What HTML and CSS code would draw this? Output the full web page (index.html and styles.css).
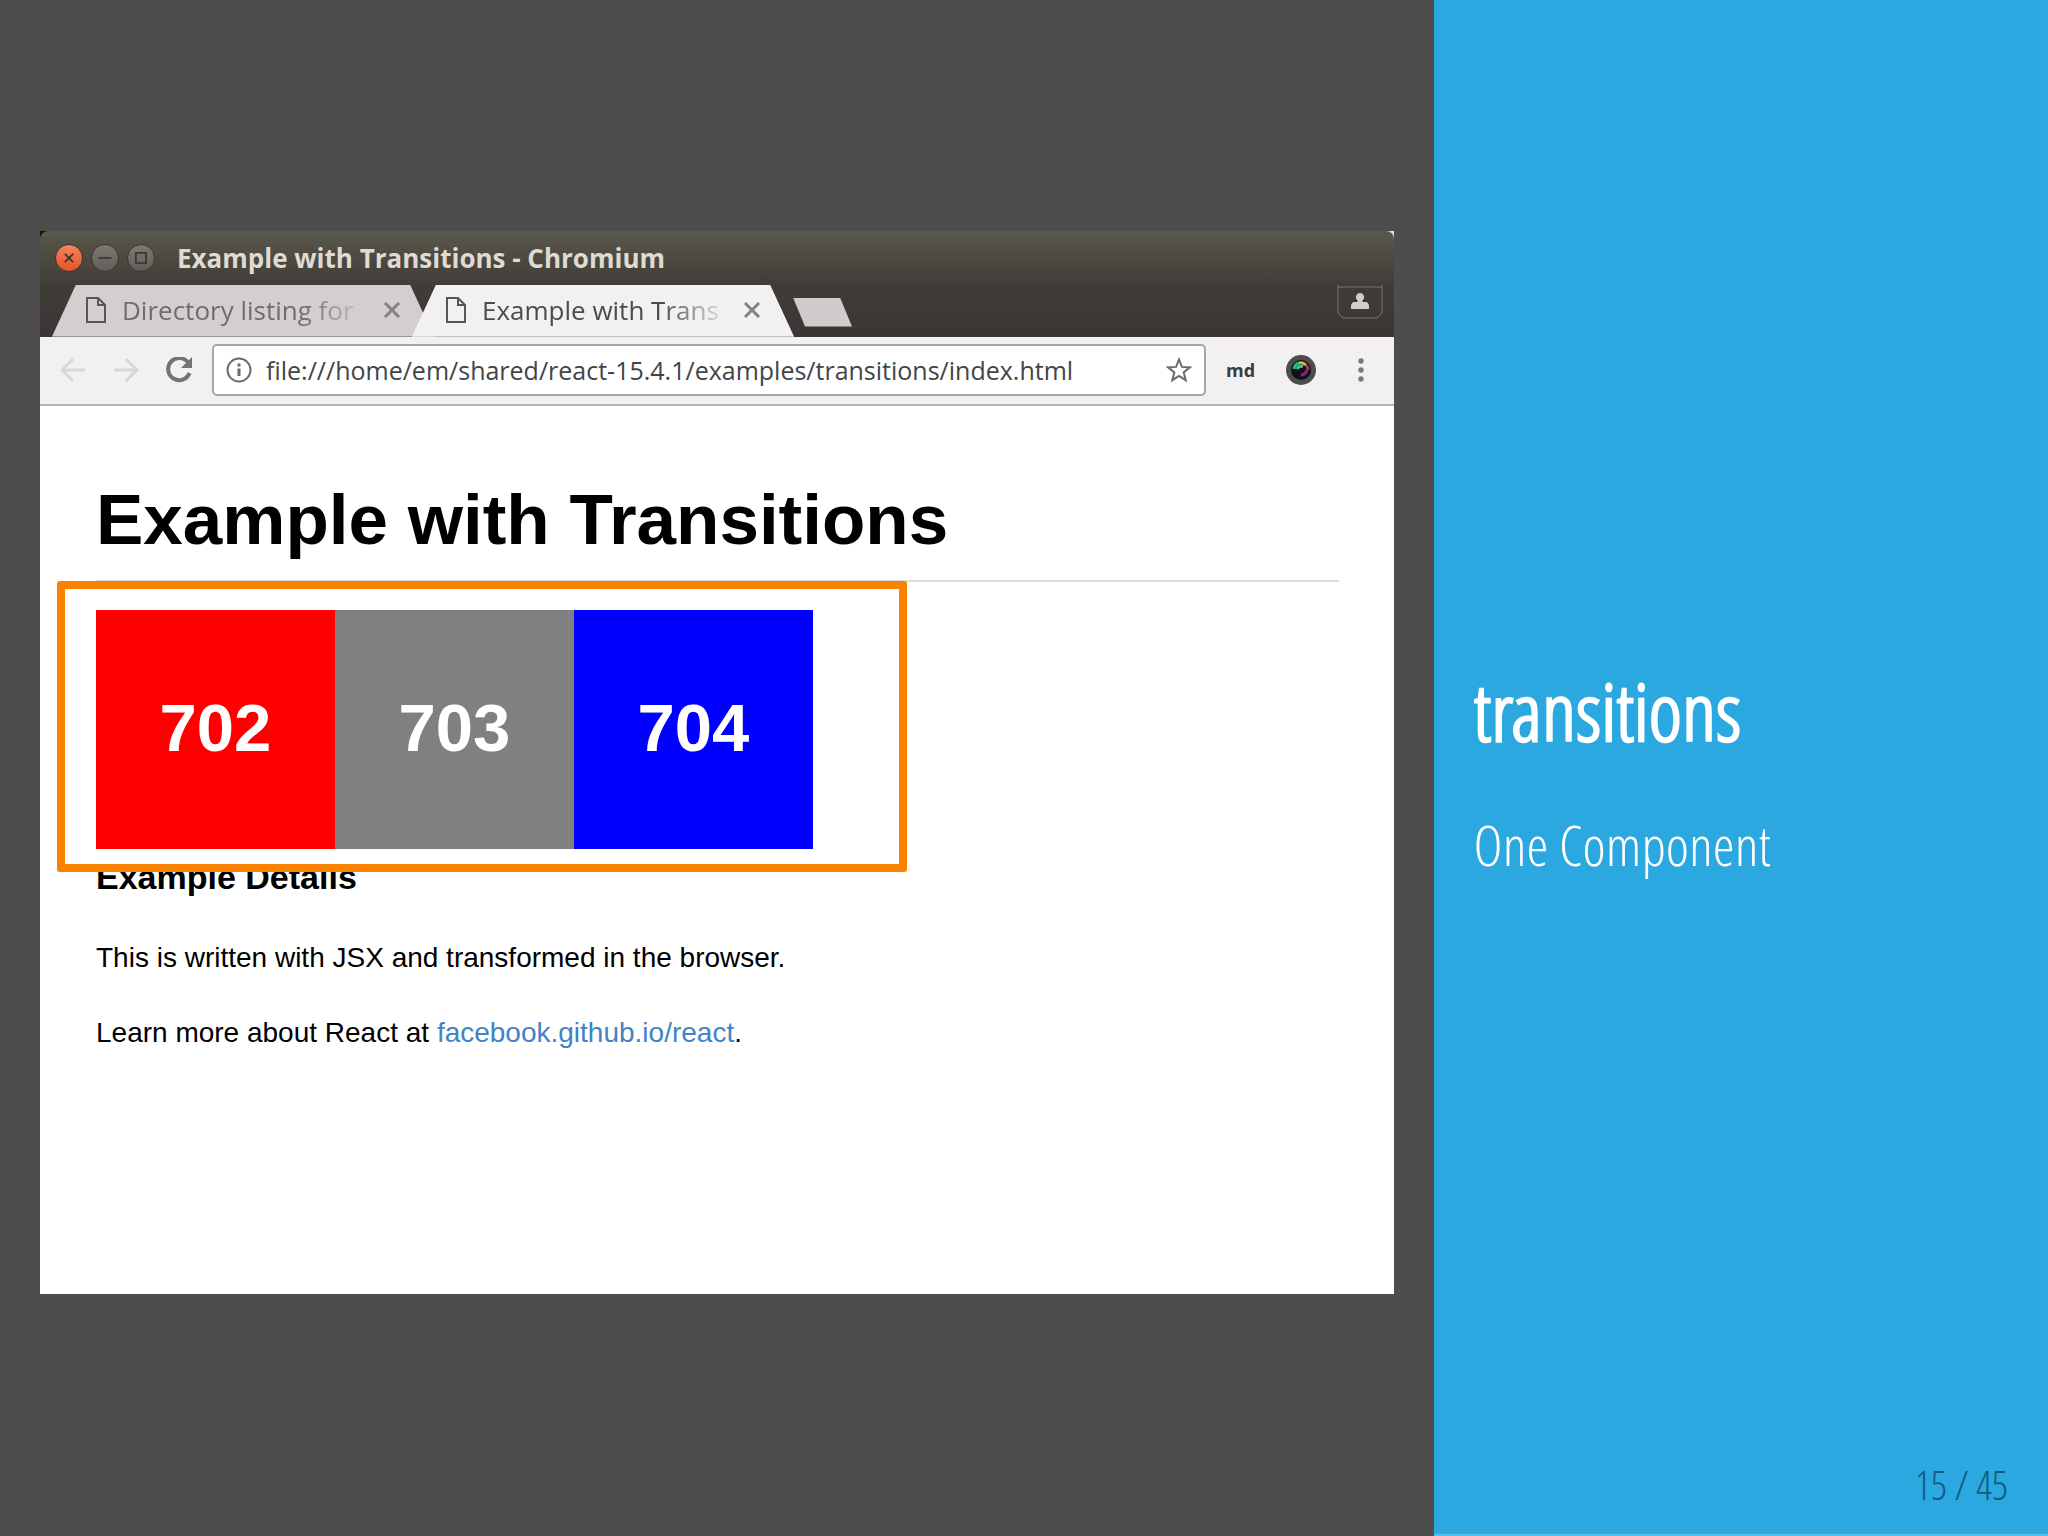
FILE: index.html
```
<!DOCTYPE html>
<html lang="en">
<head>
  <meta charset="UTF-8">
  <meta name="viewport" content="width=device-width, initial-scale=1.0">
  <title>transitions - One Component</title>
  <link rel="stylesheet" href="styles.css">
</head>
<body>
  <main class="slide">
    <section class="stage">
      <div class="window">
        <header class="titlebar">
          <button class="win-btn close" type="button" aria-label="Close">
            <svg viewBox="0 0 28 28"><path d="M9.500 9.500l9 9M18.500 9.500l-9 9"/></svg>
          </button>
          <button class="win-btn" type="button" aria-label="Minimize">
            <svg viewBox="0 0 28 28"><path d="M7 14h14"/></svg>
          </button>
          <button class="win-btn" type="button" aria-label="Maximize">
            <svg viewBox="0 0 28 28"><path d="M8.500 8.500h11v11h-11z"/></svg>
          </button>
          <span class="win-title">Example with Transitions - Chromium</span>
        </header>

        <div class="tabs">
          <div class="tab">
            <svg class="file" viewBox="0 0 20 26"><path d="M1 1h11l7 7v17H1zM12 1v7h7"/></svg>
            <span class="tab-name">Directory listing for</span>
            <button class="tab-close" type="button" aria-label="Close tab">
              <svg viewBox="0 0 16 16"><path d="M1 1l14 14M15 1L1 15"/></svg>
            </button>
          </div>
          <div class="tab active">
            <svg class="file" viewBox="0 0 20 26"><path d="M1 1h11l7 7v17H1zM12 1v7h7"/></svg>
            <span class="tab-name">Example with Trans</span>
            <button class="tab-close" type="button" aria-label="Close tab">
              <svg viewBox="0 0 16 16"><path d="M1 1l14 14M15 1L1 15"/></svg>
            </button>
          </div>
          <button class="new-tab" type="button" aria-label="New tab"></button>
          <button class="profile" type="button" aria-label="Profile">
            <svg viewBox="0 0 46 34">
              <path class="frame" d="M1 0v28l5 5h34l5-5V0M1 2h44"/>
              <path class="person" d="M23 8a4 4 0 0 1 2.500 7.200V17H30l2 3v4H14v-4l2-3h4.500v-1.800A4 4 0 0 1 23 8z"/>
            </svg>
          </button>
        </div>

        <div class="toolbar">
          <button class="nav-btn off" type="button" aria-label="Back">
            <svg viewBox="0 0 26 26"><path d="M25 13H2M13 2L2 13l11 11"/></svg>
          </button>
          <button class="nav-btn off" type="button" aria-label="Forward">
            <svg viewBox="0 0 26 26"><path d="M1 13h23M13 2l11 11-11 11"/></svg>
          </button>
          <button class="nav-btn" type="button" aria-label="Reload">
            <svg viewBox="0 0 26 26"><path class="thick" d="M22 5.500A11 11 0 1 0 23.500 16"/><path class="solid" d="M26 0v11H15z"/></svg>
          </button>
          <div class="address">
            <svg class="info" viewBox="0 0 26 26"><circle cx="13" cy="13" r="11.500"/><path d="M13 11.500V19M13 6.500v3"/></svg>
            <input class="url" type="text" aria-label="Address" value="file:///home/em/shared/react-15.4.1/examples/transitions/index.html">
            <svg class="star" viewBox="0 0 26 26"><path d="M13 2.500l2.900 7.400 8 .5-6.200 5 2 7.800-6.700-4.300-6.700 4.300 2-7.800-6.200-5 8-.5z"/></svg>
          </div>
          <button class="ext md" type="button">md</button>
          <button class="ext" type="button" aria-label="Camera">
            <svg class="lens" viewBox="0 0 30 30">
              <circle cx="15" cy="15" r="15" fill="#4b4d4f"/>
              <circle cx="15" cy="15" r="10" fill="#111"/>
              <path d="M8 14a7.500 7.500 0 0 1 5-6" stroke="#2fbd63"/>
              <path d="M13 8a8 8 0 0 1 7 2" stroke="#e8b33a"/>
              <path d="M11 14a5 5 0 0 1 6-2.500" stroke="#30c8b0"/>
              <path d="M20 10a7 7 0 0 1 2 5" stroke="#c03050"/>
              <path d="M21 15a7 7 0 0 1-6 5" stroke="#8d1b9c"/>
            </svg>
          </button>
          <button class="ext" type="button" aria-label="Menu">
            <svg class="dots" viewBox="0 0 6 26"><circle cx="3" cy="4" r="2.700"/><circle cx="3" cy="13" r="2.700"/><circle cx="3" cy="22" r="2.700"/></svg>
          </button>
        </div>

        <article class="page">
          <h1>Example with Transitions</h1>
          <div class="tiles">
            <div class="tile red">702</div>
            <div class="tile gray">703</div>
            <div class="tile blue">704</div>
            <div class="highlight"></div>
          </div>
          <h2>Example Details</h2>
          <p>This is written with JSX and transformed in the browser.</p>
          <p>Learn more about React at <a href="#">facebook.github.io/react</a>.</p>
        </article>
      </div>
    </section>

    <aside class="caption">
      <div class="caption-text">
        <h2>transitions</h2>
        <p>One Component</p>
      </div>
      <footer>15 / 45</footer>
    </aside>
  </main>
</body>
</html>
```
FILE: styles.css
```
* {
  box-sizing: border-box;
}
body {
  margin: 0;
  background-color: #4d4d4d;
  font-family: "Liberation Sans", Arial, sans-serif;
}
button {
  padding: 0;
  border: none;
  background: none;
  cursor: pointer;
}
svg {
  display: block;
  fill: none;
}

.slide {
  display: flex;
  min-height: 100vh;
}
.stage {
  width: 70%;
  display: flex;
  align-items: center;
  padding: 0 40px 12px;
}

/* browser window, the desktop shows behind its rounded corners */
.window {
  width: 100%;
  background: linear-gradient(90deg, #111 50%, #ddd 50%) top / 100% 20px no-repeat, #fff;
}
.titlebar {
  display: flex;
  align-items: center;
  gap: 8px;
  height: 54px;
  padding: 0 15px;
  border-radius: 8px 8px 0 0;
  background: linear-gradient(#5a574b, #403c37);
  color: #dfdbd2;
  font: bold 26px "Open Sans", "Noto Sans", sans-serif;
}
.win-btn {
  width: 28px;
  height: 28px;
  border: 1px solid #3a3833;
  border-radius: 50%;
  background: linear-gradient(#7c7a72, #5f5d57);
}
.win-btn svg {
  stroke: #3c3a35;
  stroke-width: 2;
}
.win-btn.close {
  background: linear-gradient(#f4845c, #e5532a);
}
.win-title {
  margin-left: 14px;
}

.tabs {
  display: flex;
  height: 52px;
  padding: 0 11px 0 12px;
  background: linear-gradient(#403c37, #3b3634);
}
.tab {
  display: flex;
  align-items: center;
  width: 382px;
  margin-right: -22px;
  padding: 0 34px;
  border-bottom: 1px solid #a9a5a6;
  background-color: #d3cfd0;
  clip-path: polygon(24px 0, 358px 0, 100% 100%, 0 100%);
  color: #6f6c6e;
  font: 26px "Open Sans", "Noto Sans", sans-serif;
}
.tab.active {
  z-index: 1;
  border-color: #f3f0f1;
  background-color: #f3f0f1;
  color: #4c4a4c;
}
.file {
  flex: none;
  width: 20px;
  height: 26px;
  stroke: #58565a;
  stroke-width: 2;
}
.tab-name {
  flex: 1;
  min-width: 0;
  margin: 0 14px 0 16px;
  overflow: hidden;
  white-space: nowrap;
  -webkit-mask-image: linear-gradient(90deg, #000 72%, transparent);
  mask-image: linear-gradient(90deg, #000 72%, transparent);
}
.tab-close svg {
  width: 16px;
  height: 16px;
  stroke: #858183;
  stroke-width: 3;
}
.new-tab {
  width: 59px;
  height: 29px;
  margin: 13px 0 0 21px;
  background-color: #d0cccc;
  clip-path: polygon(0 0, 47px 0, 100% 100%, 12px 100%);
}
.profile {
  width: 46px;
  height: 34px;
  margin-left: auto;
}
.frame {
  stroke: #77736e;
  stroke-width: 1;
}
.person {
  fill: #d0cdca;
}

.toolbar {
  display: flex;
  align-items: center;
  height: 69px;
  padding: 0 18px 0 20px;
  border-bottom: 2px solid #b5b2b3;
  background-color: #f3f0f1;
}
.nav-btn {
  width: 26px;
  margin-right: 27px;
}
.nav-btn:nth-child(3) {
  margin-right: 20px;
}
.nav-btn svg {
  stroke: #757274;
  stroke-width: 3;
}
.nav-btn.off svg {
  stroke: #d9d6d7;
}
.nav-btn .thick {
  stroke-width: 4;
}
.nav-btn .solid {
  fill: #757274;
  stroke: none;
}
.address {
  flex: 1;
  display: flex;
  align-items: center;
  height: 52px;
  padding: 0 12px;
  border: 2px solid #a9a5a6;
  border-radius: 5px;
  background-color: #fff;
}
.info, .star {
  flex: none;
  width: 26px;
  height: 26px;
  stroke: #6c6a6c;
  stroke-width: 2;
}
.info path {
  stroke-width: 3;
}
.url {
  flex: 1;
  min-width: 0;
  margin: 0 14px;
  padding: 0;
  border: none;
  outline: none;
  background: none;
  color: #424548;
  font: 25px "Open Sans", "Noto Sans", sans-serif;
}
.ext {
  display: flex;
  justify-content: center;
  width: 30px;
  margin-left: 30px;
}
.ext.md {
  margin-left: 20px;
  color: #3d3a3b;
  font: bold 18px "Open Sans", "Noto Sans", sans-serif;
}
.lens {
  width: 30px;
  height: 30px;
  stroke-width: 3;
}
.dots {
  width: 6px;
  height: 26px;
  fill: #7b787a;
}

.page {
  min-height: 888px;
  padding: 72px 55px 0 56px;
  color: #000;
  font-size: 28px;
}
.page h1 {
  margin: 0 0 28px;
  padding-bottom: 18px;
  border-bottom: 2px solid #ddd;
  font-size: 71px;
  line-height: 84px;
}
.tiles {
  position: relative;
  display: flex;
}
.tile {
  width: 239px;
  height: 239px;
  color: #fff;
  font-size: 67px;
  font-weight: bold;
  line-height: 236px;
  text-align: center;
}
.red {
  background-color: #f00;
}
.gray {
  background-color: #808080;
}
.blue {
  background-color: #00f;
}
/* orange marker drawn over the demo */
.highlight {
  position: absolute;
  top: -29px;
  left: -39px;
  width: 850px;
  height: 291px;
  border: 8px solid #fb8200;
  border-radius: 3px;
}
.page h2 {
  margin: 8px 0 41px;
  font-size: 34px;
  line-height: 40px;
}
.page p {
  margin: 0 0 35px;
  line-height: 40px;
}
.page a {
  color: #4183c4;
  text-decoration: none;
}

/* right panel */
.caption {
  flex: 1;
  display: flex;
  flex-direction: column;
  padding: 0 40px;
  border-bottom: 2px solid #55c0ea;
  background-color: #2ba8e0;
  color: #fff;
  font-family: "Open Sans Condensed Light", "Open Sans Condensed", "Open Sans", sans-serif;
  font-weight: 300;
}
.caption-text {
  flex: 1;
  padding-top: 662px;
}
.caption h2 {
  margin: 0 0 46px;
  font-size: 80px;
  font-weight: 600;
  line-height: 96px;
}
.caption p {
  margin: 0;
  font-size: 56px;
  line-height: 80px;
}
.caption footer {
  padding-bottom: 21px;
  color: #125a7c;
  font-size: 40px;
  line-height: 56px;
  text-align: right;
}
```
